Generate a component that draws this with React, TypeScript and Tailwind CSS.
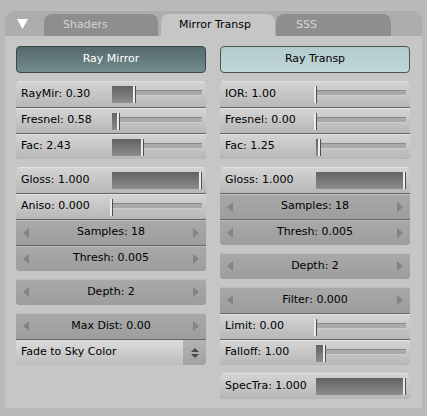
import React from 'react';

type RowKind = 'slider' | 'num' | 'menu';

interface RowDef {
  kind: RowKind;
  label: string;
  fill?: number; // slider fill in px
}

const LeftArrow: React.FC = () => (
  <svg width="6" height="10" viewBox="0 0 6 10" className="absolute left-[7px] top-[8px]">
    <polygon points="6,0 0,5 6,10" fill="#838383" />
  </svg>
);

const RightArrow: React.FC = () => (
  <svg width="6" height="10" viewBox="0 0 6 10" className="absolute right-[7px] top-[8px]">
    <polygon points="0,0 6,5 0,10" fill="#838383" />
  </svg>
);

const Row: React.FC<{ row: RowDef; first: boolean }> = ({ row, first }) => {
  const sep = first ? '' : 'border-t border-[#666666]';

  if (row.kind === 'num') {
    return (
      <div className={`relative h-[26px] flex items-center justify-center bg-gradient-to-b from-[#a9a9a9] to-[#9d9d9d] shadow-[inset_0_1px_0_#bdbdbd] ${sep}`}>
        <LeftArrow />
        <span>{row.label}</span>
        <RightArrow />
      </div>
    );
  }

  if (row.kind === 'menu') {
    return (
      <div className={`relative h-[26px] flex items-center bg-gradient-to-b from-[#dcdcdc] to-[#bdbdbd] ${sep}`}>
        <span className="pl-[5px] flex-1">{row.label}</span>
        <div className="w-[23px] h-full flex flex-col items-center justify-center gap-[2px] bg-gradient-to-b from-[#b4b4b4] to-[#a2a2a2]">
          <svg width="8" height="4" viewBox="0 0 8 4">
            <polygon points="0,4 4,0 8,4" fill="#4a4a4a" />
          </svg>
          <svg width="8" height="4" viewBox="0 0 8 4">
            <polygon points="0,0 8,0 4,4" fill="#4a4a4a" />
          </svg>
        </div>
      </div>
    );
  }

  const fill = row.fill ?? 0;
  return (
    <div className={`relative h-[26px] flex items-center bg-gradient-to-b from-[#d5d5d5] to-[#b7b7b7] shadow-[inset_0_1px_0_#e2e2e2] ${sep}`}>
      <span className="pl-[5px]">{row.label}</span>
      <div className="absolute left-[96px] right-[4px] top-0 bottom-0">
        <div className="absolute left-0 right-0 top-[9px] h-[6px] bg-[#a9a9a9] border-t border-[#8a8a8a] border-b border-b-[#cdcdcd]" />
        <div
          className="absolute left-0 top-[5px] h-[17px] bg-gradient-to-b from-[#626262] to-[#8d8d8d]"
          style={{ width: fill }}
        />
        <div
          className="absolute top-[5px] h-[17px] w-[3px] bg-[#ececec] border-r border-[#4e4e4e]"
          style={{ left: fill - 2 }}
        />
      </div>
    </div>
  );
};

const Group: React.FC<{ rows: RowDef[] }> = ({ rows }) => (
  <div className="rounded-[4px] overflow-hidden outline outline-1 -outline-offset-1 outline-[#505050] flex flex-col">
    {rows.map((r, i) => (
      <Row key={r.label} row={r} first={i === 0} />
    ))}
  </div>
);

const left: RowDef[][] = [
  [
    { kind: 'slider', label: 'RayMir: 0.30', fill: 23 },
    { kind: 'slider', label: 'Fresnel: 0.58', fill: 7 },
    { kind: 'slider', label: 'Fac: 2.43', fill: 31 },
  ],
  [
    { kind: 'slider', label: 'Gloss: 1.000', fill: 89 },
    { kind: 'slider', label: 'Aniso: 0.000', fill: 0 },
    { kind: 'num', label: 'Samples: 18' },
    { kind: 'num', label: 'Thresh: 0.005' },
  ],
  [{ kind: 'num', label: 'Depth: 2' }],
  [
    { kind: 'num', label: 'Max Dist: 0.00' },
    { kind: 'menu', label: 'Fade to Sky Color' },
  ],
];

const right: RowDef[][] = [
  [
    { kind: 'slider', label: 'IOR: 1.00', fill: 0 },
    { kind: 'slider', label: 'Fresnel: 0.00', fill: 0 },
    { kind: 'slider', label: 'Fac: 1.25', fill: 4 },
  ],
  [
    { kind: 'slider', label: 'Gloss: 1.000', fill: 89 },
    { kind: 'num', label: 'Samples: 18' },
    { kind: 'num', label: 'Thresh: 0.005' },
  ],
  [{ kind: 'num', label: 'Depth: 2' }],
  [
    { kind: 'num', label: 'Filter: 0.000' },
    { kind: 'slider', label: 'Limit: 0.00', fill: 0 },
    { kind: 'slider', label: 'Falloff: 1.00', fill: 9 },
  ],
  [{ kind: 'slider', label: 'SpecTra: 1.000', fill: 89 }],
];

const App: React.FC = () => {
  return (
    <div className="w-[427px] h-[416px] bg-[#b9b9b9] px-[5px] pt-[11px] pb-[8px] flex flex-col font-['DejaVu_Sans',sans-serif] text-[11px] text-black">
      <div className="flex-1 flex flex-col rounded-t-[9px] overflow-hidden">
        {/* Tab header */}
        <div className="h-[25px] shrink-0 bg-[#adadad] flex items-end">
          <div className="w-[39px] h-full flex items-center pl-[12px]">
            <svg width="11" height="10" viewBox="0 0 11 10">
              <polygon points="0,0 11,0 5.5,10" fill="#ffffff" />
            </svg>
          </div>
          <div className="w-[114px] h-[22px] rounded-t-[8px] bg-[#8e8e8e] text-[#d4d4d4] flex items-center pl-[19px]">
            Shaders
          </div>
          <div className="ml-[3px] w-[114px] h-[22px] rounded-t-[8px] bg-[#c6c6c6] flex items-center pl-[18px]">
            Mirror Transp
          </div>
          <div className="ml-[1px] w-[115px] h-[22px] rounded-t-[8px] bg-[#8e8e8e] text-[#d4d4d4] flex items-center pl-[20px]">
            SSS
          </div>
        </div>

        {/* Body */}
        <div className="flex-1 bg-[#c6c6c6] pt-[10px] pl-[11px] flex gap-[14px]">
          <div className="w-[190px] flex flex-col gap-2">
            <div className="h-[27px] rounded-[4px] border border-[#3b4748] bg-gradient-to-b from-[#556a6c] to-[#748c8e] text-white flex items-center justify-center">
              Ray Mirror
            </div>
            {left.map((g, i) => (
              <Group key={i} rows={g} />
            ))}
          </div>
          <div className="w-[190px] flex flex-col gap-2">
            <div className="h-[27px] rounded-[4px] border border-[#4b5556] bg-gradient-to-b from-[#b3cbcd] to-[#c0d6d8] flex items-center justify-center">
              Ray Transp
            </div>
            {right.map((g, i) => (
              <Group key={i} rows={g} />
            ))}
          </div>
        </div>
      </div>
    </div>
  );
};

export default App;
